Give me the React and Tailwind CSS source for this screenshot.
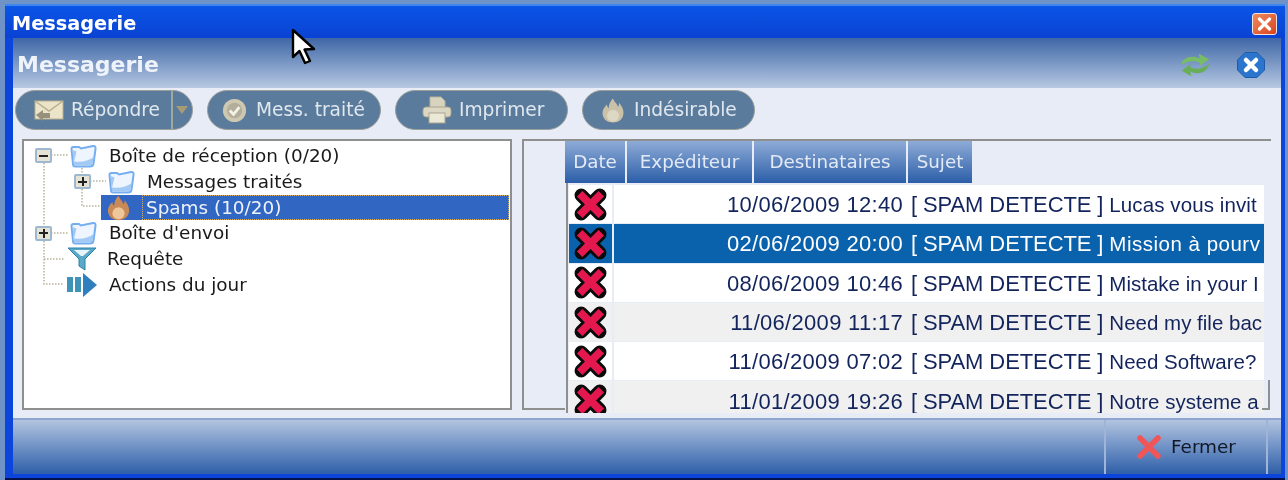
import React from "react";

const FONT = { fontFamily: '"DejaVu Sans", Verdana, sans-serif' };

function RedX({ size = 34 }) {
  return (
    <svg width={size} height={size} viewBox="0 0 34 34" className="block shrink-0">
      <path d="M8 8 L26 26 M26 8 L8 26" stroke="#0b0b0b" strokeWidth="13" strokeLinecap="round" />
      <path d="M6.5 6.5 L27.5 27.5 M27.5 6.5 L6.5 27.5" stroke="#e4184f" strokeWidth="7.5" strokeLinecap="butt" />
    </svg>
  );
}

function Folder({ className = "" }) {
  return (
    <svg width="28" height="24" viewBox="0 0 28 24" className={"block shrink-0 " + className}>
      <path d="M4 20 L2.5 5 Q2.5 3 4.5 3 L10 3 L12 4.5 L24 2 Q27 1.6 26.5 5 L24.5 19.5 Q24 22.5 21 22.5 L6.5 22.5 Q4 22.5 4 20 Z" fill="#eef5fe" stroke="#74aef0" strokeWidth="2" />
      <path d="M5 21.5 L21 21.5 Q23.4 21.5 23.8 19 L24.6 13 Q17 19 5 17.5 Z" fill="#a3c9f5" />
      <path d="M3.5 6 L4.5 20 L7.5 7.5 Z" fill="#a3c9f5" />
    </svg>
  );
}

function Flame({ w = 28, h = 30, a = "#c98a58", b = "#f0c79a" }) {
  return (
    <svg width={w} height={h} viewBox="0 0 28 30" className="block shrink-0">
      <path d="M14 1 C16 6 19 7 20 11 C21 9 21 8 21 6 C25 11 27 15 26 20 C25 26 20 29 14 29 C8 29 3 26 2 20 C1 15 4 11 7 8 C7 10 8 12 9 12 C9 8 11 4 14 1 Z" fill={a} />
      <ellipse cx="14" cy="21" rx="7" ry="7" fill={b} />
    </svg>
  );
}

function Expander({ minus }) {
  return (
    <span className="w-[17px] h-[15px] flex items-center justify-center rounded-[2px] border-2 border-[#9db8cf] bg-[#e6e2d4] shrink-0 relative">
      <span className="absolute w-[9px] h-[2px] bg-[#222]" />
      {!minus && <span className="absolute w-[2px] h-[9px] bg-[#222]" />}
    </span>
  );
}

function ToolBtn({ icon, label, w, gap, px }) {
  return (
    <div className={`h-[40px] rounded-[20px] bg-[#5b7b9c] border border-[#9a9f9c] flex items-center ${gap} ${px} ${w} text-[#dfe7ef] text-[18.6px]`}>
      {icon}
      <span>{label}</span>
    </div>
  );
}

const rows = [
  ["10/06/2009 12:40", "Lucas vous invit", "white", "tracking-[0.1px]"],
  ["02/06/2009 20:00", "Mission à pourv", "sel", "tracking-[0.5px]"],
  ["08/06/2009 10:46", "Mistake in your I", "white", "tracking-[0px]"],
  ["11/06/2009 11:17", "Need my file bac", "gray", "tracking-[0px]"],
  ["11/06/2009 07:02", "Need Software?", "white", "tracking-[0px]"],
  ["11/01/2009 19:26", "Notre systeme a", "gray", "tracking-[0px]"],
];

const headBg = "bg-gradient-to-b from-[#8eabd6] to-[#2b5ea8]";

function Head({ w, children }) {
  return (
    <div className={`${w} h-full ${headBg} text-[#e3eaf5] text-[18.3px] flex items-center justify-center shrink-0`}>
      {children}
    </div>
  );
}

function TreeRow({ pl, icon, children, className = "", textCls = "" }) {
  return (
    <div className={`h-[25.8px] flex items-center text-[#1a1a1a] text-[18.4px] whitespace-nowrap ${pl} ${className}`}>
      {icon}
      <span className={textCls}>{children}</span>
    </div>
  );
}

export default function App() {
  return (
    <div style={FONT} className="relative w-[1288px] h-[480px] overflow-hidden bg-[#6f93c6] pt-[4px] pl-[5px] pr-[3px] blur-[0.6px]">
      <div className="h-full flex flex-col bg-[#0b45dc] border-t-2 border-[#3f86ee] border-b-2 border-b-[#04104a] pb-[4px]">
        {/* Title bar */}
        <div className="h-[32px] shrink-0 flex items-center justify-between pt-[5px] pl-[7px] pr-[8px] bg-gradient-to-b from-[#0a55e6] to-[#0a42d2]">
          <span className="text-white font-bold text-[19.3px]">Messagerie</span>
          <span className="w-[25px] h-[22px] mt-[-2px] rounded-[3px] border border-[#f0e4dc] bg-gradient-to-br from-[#ee8a5c] to-[#d9401c] flex items-center justify-center">
            <svg width="15" height="14" viewBox="0 0 15 14"><path d="M2.5 2 L12.5 12 M12.5 2 L2.5 12" stroke="#fff" strokeWidth="3.2" strokeLinecap="round" /></svg>
          </span>
        </div>

        {/* Client area */}
        <div className="flex-1 min-h-0 flex flex-col ml-[8px] mr-[4px] bg-[#e8ecf6]">
          {/* Header */}
          <div className="h-[50px] shrink-0 flex items-center pl-[4px] pr-[16px] pt-[3px] bg-gradient-to-b from-[#3f67a6] to-[#b8c9e2]">
            <span className="text-[#eef2f9] font-bold text-[22px]">Messagerie</span>
            <svg width="32" height="26" viewBox="0 0 34 26" className="ml-auto mr-[26px]">
              <path d="M2 13 C4 5 13 2 22 6 L21 1 L32 7 L22 14 L22 10.5 C15 7.5 9 9 2 13 Z" fill="#78bd66" />
              <path d="M32 12 C30 21 21 24 12 20 L13 25 L3 19 L12 12 L12 15.5 C19 18.5 25 17 32 12 Z" fill="#68ae56" />
            </svg>
            <svg width="28" height="26" viewBox="0 0 28 26">
              <path d="M8 0.5 H20 L27.5 8 V18 L20 25.5 H8 L0.5 18 V8 Z" fill="#2c75cf" stroke="#1f5ca8" />
              <path d="M9 8 L19 18 M19 8 L9 18" stroke="#fff" strokeWidth="4.5" strokeLinecap="round" />
            </svg>
          </div>

          {/* Toolbar */}
          <div className="h-[51px] shrink-0 flex items-start pt-[2px] pl-[2px]">
            <div className="h-[40px] w-[178px] rounded-[20px] bg-[#5b7b9c] border border-[#9a9f9c] flex items-center text-[#dfe7ef] text-[18.6px] overflow-hidden">
              <div className="w-[157px] h-full flex items-center gap-[7px] pl-[18px] border-r-2 border-[#a3a89f] shrink-0">
                <svg width="30" height="24" viewBox="0 0 30 24" className="shrink-0">
                  <rect x="1" y="3" width="28" height="18" fill="#ece4c8" stroke="#b9ae8c" />
                  <path d="M1 3 L15 13 L29 3" fill="none" stroke="#b9ae8c" strokeWidth="1.5" />
                  <path d="M2 17 L9 12 V15 H16 V20 H9 V23 Z" fill="#97907a" />
                </svg>
                <span>Répondre</span>
              </div>
              <svg width="14" height="10" viewBox="0 0 14 10" className="ml-[2px]"><path d="M1 1 H13 L7 9 Z" fill="#a89a72" /></svg>
            </div>
            <div className="w-[14px] shrink-0" />
            <ToolBtn
              w="w-[174px]"
              px="pl-[14px]"
              gap="gap-[9px]"
              label="Mess. traité"
              icon={
                <svg width="25" height="25" viewBox="0 0 26 26" className="shrink-0">
                  <circle cx="13" cy="13" r="12" fill="#cfc8b0" />
                  <circle cx="13" cy="13" r="8" fill="#b3ae9c" />
                  <path d="M8 13 L12 17 L18 9.5" fill="none" stroke="#f4f1e4" strokeWidth="3" />
                </svg>
              }
            />
            <div className="w-[14px] shrink-0" />
            <ToolBtn
              w="w-[173px]"
              px="pl-[26px]"
              gap="gap-[7px]"
              label="Imprimer"
              icon={
                <svg width="30" height="28" viewBox="0 0 30 28" className="shrink-0">
                  <path d="M8 1 H19 L23 5 V12 H8 Z" fill="#d8d3bc" stroke="#b8b39c" />
                  <rect x="1" y="11" width="28" height="10" rx="3" fill="#dcd7c2" stroke="#aaa58f" />
                  <rect x="7" y="17" width="16" height="10" fill="#ece8d6" stroke="#aaa58f" />
                </svg>
              }
            />
            <div className="w-[14px] shrink-0" />
            <ToolBtn
              w="w-[173px]"
              px="pl-[18px]"
              gap="gap-[9px]"
              label="Indésirable"
              icon={<Flame w={24} h={27} a="#c9c2a8" b="#ddd8c4" />}
            />
          </div>

          {/* Panels */}
          <div className="flex-1 min-h-0 flex pl-[9px] pb-[8px] gap-[10px]">
            {/* Tree */}
            <div className="relative w-[490px] shrink-0 border-2 border-[#8f8f8f] bg-white pt-[2px] pr-[1px] overflow-hidden">
              <svg width="486" height="160" className="absolute left-0 top-0" fill="none" stroke="#b9b39b" strokeWidth="1.5" strokeDasharray="1.5 1.5">
                <path d="M20 22 V143 H40" />
                <path d="M27 14 H44" />
                <path d="M58 24 V65 H77" />
                <path d="M66 40 H82" />
                <path d="M27 92 H44" />
                <path d="M20 118 H40" />
              </svg>
              <TreeRow pl="pl-[11px]" icon={<><Expander minus /><Folder className="relative ml-[17px] mr-[12px]" /></>}>Boîte de réception (0/20)</TreeRow>
              <TreeRow pl="pl-[50px]" icon={<><Expander /><Folder className="relative ml-[16px] mr-[12px]" /></>}>Messages traités</TreeRow>
              <TreeRow
                pl="ml-[77px]"
                className="relative bg-[#3166c2] !text-[#eef3fb]"
                textCls="flex-1 h-full flex items-center border border-dotted border-[#d9b26a] pl-[3px]"
                icon={<span className="ml-[5px] mr-[11px]"><Flame w={25} h={26} /></span>}
              >Spams (10/20)</TreeRow>
              <TreeRow pl="pl-[11px]" icon={<><Expander /><Folder className="relative ml-[17px] mr-[12px]" /></>}>Boîte d'envoi</TreeRow>
              <TreeRow pl="pl-[43px]" icon={
                <svg width="30" height="24" viewBox="0 0 30 24" className="relative shrink-0 mr-[10px]">
                  <path d="M1 1 H29 L18 12 V23 L12 19 V12 Z" fill="#5aa9c9" stroke="#2d80a8" />
                  <path d="M7 3 H23 L16 9 H14 Z" fill="#e8f4fa" />
                </svg>
              }>Requête</TreeRow>
              <TreeRow pl="pl-[42px]" icon={
                <svg width="32" height="24" viewBox="0 0 32 24" className="relative shrink-0 mr-[11px]">
                  <rect x="1" y="4" width="6" height="15" fill="#3d94b8" />
                  <rect x="9" y="4" width="6" height="15" fill="#3d94b8" />
                  <path d="M17 0 L31 12 L17 24 Z" fill="#2f7fbf" />
                </svg>
              }>Actions du jour</TreeRow>
            </div>

            {/* Grid */}
            <div className="w-[749px] shrink-0 border-l-2 border-t-2 border-[#8f8f8f] flex relative">
              <div className="absolute right-[1px] bottom-0 w-[8px] h-[30px] border-r-2 border-b-2 border-[#8f8f8f]" />
              <div className="w-[41px] shrink-0 border-b-2 border-[#8f8f8f]" />
              <div className="w-[699px] shrink-0 mb-[-3px] flex flex-col overflow-hidden">
                <div className="h-[42px] shrink-0 flex gap-[2px]">
                  <Head w="w-[60px]">Date</Head>
                  <Head w="w-[125px]">Expéditeur</Head>
                  <Head w="w-[152px]">Destinataires</Head>
                  <Head w="w-[64px]">Sujet</Head>
                </div>
                <div className="flex-1 min-h-0 ml-[1px] pl-[1px] border-l-2 border-[#8f8f8f] pt-[2px] overflow-hidden">
                  {rows.map(([d, s, kind, tr]) => {
                    const bg = kind === "sel" ? "bg-[#0a62ad]" : kind === "gray" ? "bg-[#f0f0f0]" : "bg-white";
                    const fg = kind === "sel" ? "text-white" : "text-[#13245c]";
                    return (
                      <div key={d} className={`h-[39.3px] shrink-0 flex items-center border-b border-[#e8ecf6] whitespace-nowrap ${bg} ${fg}`} style={{ fontFamily: '"Liberation Sans", Arial, sans-serif' }}>
                        <div className="w-[45px] h-full shrink-0 flex items-center justify-center border-r-2 border-[#e8ecf6]">
                          <RedX size={35} />
                        </div>
                        <div className="w-[291px] shrink-0 text-right text-[22px] leading-[26px] tracking-[0.3px] pr-[2px] pt-[2px]">{d}</div>
                        <div className="ml-[6px] text-[22px] leading-[26px] tracking-[-0.1px] pt-[2px]">[ SPAM DETECTE ]</div>
                        <div className={`ml-[6px] text-[20.5px] leading-[26px] pt-[2px] ${tr}`}>{s}</div>
                      </div>
                    );
                  })}
                </div>
              </div>
            </div>
          </div>

          {/* Footer */}
          <div className="h-[56px] shrink-0 flex border-t-2 border-[#8ea6cf] bg-gradient-to-b from-[#b2c4e0] to-[#2e5fa8]">
            <div className="ml-auto w-[164px] border-l-2 border-r-2 border-[#9fb4d6] flex items-center pl-[31px] gap-[10px] text-[#111827] text-[18.4px] mr-[13px]">
              <svg width="24" height="24" viewBox="0 0 24 24" className="shrink-0">
                <path d="M3 3 L21 21 M21 3 L3 21" stroke="#f0555a" strokeWidth="5.5" strokeLinecap="round" />
              </svg>
              <span>Fermer</span>
            </div>
          </div>
        </div>
      </div>

      {/* Mouse cursor */}
      <svg width="26" height="38" viewBox="0 0 26 38" className="absolute left-[291px] top-[28px]">
        <path d="M2 2 V29 L8.5 23 L14 35 L19 33 L13.5 21.5 L23 21 Z" fill="#fff" stroke="#000" strokeWidth="2.4" strokeLinejoin="round" />
      </svg>
    </div>
  );
}
